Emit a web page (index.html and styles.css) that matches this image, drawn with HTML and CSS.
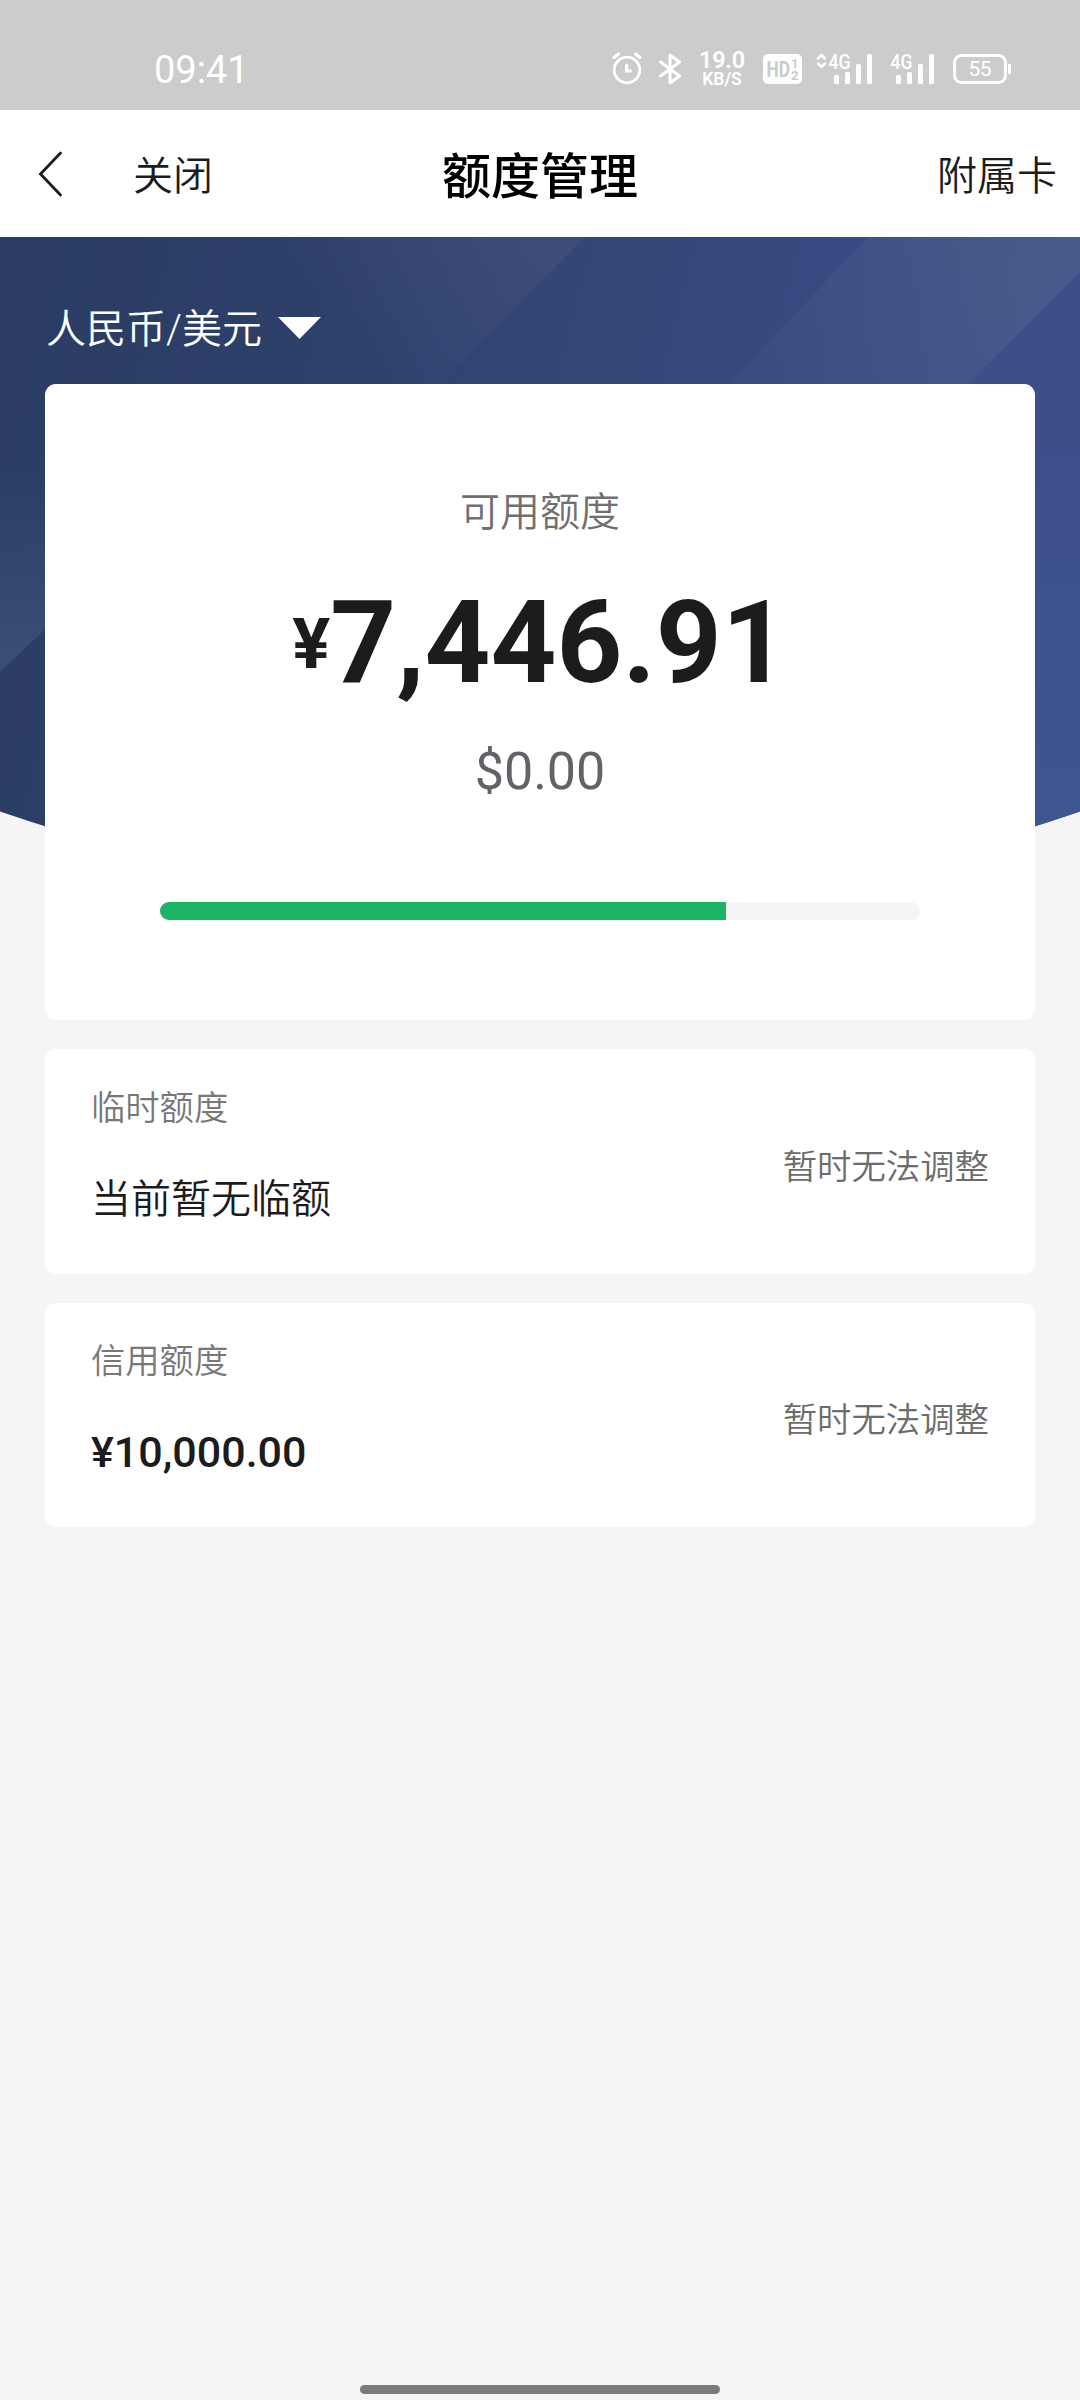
FILE: index.html
```html
<!DOCTYPE html>
<html lang="zh-CN">
<head>
<meta charset="utf-8">
<title>额度管理</title>
<link rel="stylesheet" href="styles.css">
</head>
<body>
<div class="screen">
  <div class="status">
    <span class="clock">09:41</span>
    <div class="indicators">
      <svg class="alarm" width="32" height="34" viewBox="0 0 32 34" fill="none" stroke="#fff" stroke-width="2.8" stroke-linecap="round"><circle cx="16" cy="19" r="12.8"/><path d="M15.600 14v6h4M3 6.500l4.500-3.500M29 6.500l-4.500-3.500" stroke-width="3.200"/></svg>
      <svg class="bluetooth" width="24" height="34" viewBox="0 0 24 34" fill="none" stroke="#fff" stroke-width="3" stroke-linejoin="round" stroke-linecap="round"><path d="M2.500 10l19 14-9.500 7V3l9.500 7-19 14"/></svg>
      <div class="speed"><span class="rate">19.0</span><span class="unit">KB/S</span></div>
      <svg class="hd" width="39" height="30" viewBox="0 0 39 30"><rect width="39" height="30" rx="5" fill="#fff"/><g class="hd-text"><text x="3.500" y="23" font-size="22" textLength="23.500" lengthAdjust="spacingAndGlyphs">HD</text><text x="28" y="14" font-size="13">1</text><text x="28" y="26" font-size="13">2</text></g></svg>
      <svg class="signal-a" width="58" height="34" viewBox="0 -2 58 34"><path d="M2 6.500l3.500-3.500 3.500 3.500M2 11.500l3.500 3.500 3.500-3.500" fill="none" stroke="#fff" stroke-width="2.600" stroke-linecap="round"/><text class="net" x="12.500" y="16.500" textLength="22" lengthAdjust="spacingAndGlyphs">4G</text><g fill="#fff"><rect x="18" y="23" width="5" height="9" rx="1.500"/><rect x="29" y="20" width="5" height="12" rx="1.500"/><rect x="40" y="12" width="5" height="20" rx="1.500"/><rect x="51" y="2" width="5" height="30" rx="1.500"/></g></svg>
      <svg class="signal-b" width="46" height="34" viewBox="0 -2 46 34"><text class="net" x="0.500" y="16.500" textLength="22" lengthAdjust="spacingAndGlyphs">4G</text><g fill="#fff"><rect x="6" y="23" width="5" height="9" rx="1.500"/><rect x="17" y="20" width="5" height="12" rx="1.500"/><rect x="28" y="12" width="5" height="20" rx="1.500"/><rect x="39" y="2" width="5" height="30" rx="1.500"/></g></svg>
      <svg class="battery" width="59" height="30" viewBox="0 0 59 30"><rect x="1.500" y="1.500" width="51" height="27" rx="7" fill="none" stroke="#fff" stroke-width="3"/><rect x="55" y="10" width="3" height="10" rx="1" fill="#fff"/><text class="level" x="15.500" y="22" textLength="23">55</text></svg>
    </div>
  </div>

  <header class="nav">
    <div class="nav-left">
      <svg class="back" width="26" height="48" viewBox="0 0 26 48" fill="none" stroke="#1c1c1c" stroke-width="2.800" stroke-linecap="round"><path d="M22.500 3L2.500 24l20 21"/></svg>
      <span>关闭</span>
    </div>
    <h1 class="title">额度管理</h1>
    <span class="nav-right">附属卡</span>
  </header>

  <main class="content">
    <svg class="backdrop" width="1080" height="620" viewBox="0 0 1080 620">
      <defs>
        <linearGradient id="base" x1="0" y1="0" x2="1" y2="0.15"><stop offset="0" stop-color="#2a3c62"/><stop offset=".3" stop-color="#2d406a"/><stop offset=".6" stop-color="#344779"/><stop offset="1" stop-color="#3d4f8e"/></linearGradient>
        <linearGradient id="s1" gradientUnits="userSpaceOnUse" x1="390" y1="140" x2="530" y2="10"><stop offset="0" stop-color="#4a5680" stop-opacity="0"/><stop offset="1" stop-color="#4a5680" stop-opacity=".45"/></linearGradient>
        <linearGradient id="s2" gradientUnits="userSpaceOnUse" x1="0" y1="220" x2="0" y2="430"><stop offset="0" stop-color="#4c6585" stop-opacity="0"/><stop offset="1" stop-color="#4c6585" stop-opacity=".45"/></linearGradient>
        <linearGradient id="s3" gradientUnits="userSpaceOnUse" x1="740" y1="140" x2="1010" y2="50"><stop offset="0" stop-color="#4a5987" stop-opacity=".15"/><stop offset="1" stop-color="#4a5f8a" stop-opacity=".65"/></linearGradient>
        <linearGradient id="s4" x1="0" y1="0" x2="0" y2="1"><stop offset=".2" stop-color="#3d4e89"/><stop offset="1" stop-color="#3e5691"/></linearGradient>
        <clipPath id="shape"><path d="M0 0H1080V574.500Q540 760 0 574.500Z"/></clipPath>
      </defs>
      <g clip-path="url(#shape)">
        <path fill="url(#base)" d="M0 0h1080v620H0z"/>
        <path fill="url(#s1)" d="M0 0h586L436 150H0z"/>
        <path fill="url(#s2)" d="M0 200h60v178L0 435z"/>
        <path fill="url(#s3)" d="M868 0h212v36L960 156H720z"/>
        <path fill="url(#s4)" d="M1080 36v584H960V156z"/>
      </g>
    </svg>

    <div class="currency">
      <span>人民币/美元</span>
      <svg class="caret" width="43" height="22" viewBox="0 0 43 22"><path d="M0 0h43L21.500 22z" fill="#fff"/></svg>
    </div>

    <section class="card summary">
      <div class="label">可用额度</div>
      <div class="amount"><span class="yen">¥</span><span class="figure">7,446.91</span></div>
      <div class="usd">$0.00</div>
      <div class="track"><div class="fill" style="width:74.47%"></div></div>
    </section>

    <section class="card row">
      <div class="info">
        <span class="name">临时额度</span>
        <span class="value">当前暂无临额</span>
      </div>
      <span class="note">暂时无法调整</span>
    </section>

    <section class="card row">
      <div class="info">
        <span class="name">信用额度</span>
        <span class="value money">¥10,000.00</span>
      </div>
      <span class="note">暂时无法调整</span>
    </section>
  </main>
  <div class="home-bar"></div>
</div>
</body>
</html>
```
FILE: styles.css
```css
* { box-sizing: border-box; }
body {
  margin: 0;
  background: #f5f5f5;
  font-family: Roboto, "Noto Sans CJK SC", sans-serif;
  color: #1c1c1c;
}
svg { display: block; flex: none; overflow: visible; }
.screen {
  width: 1080px;
  height: 2400px;
  display: flex;
  flex-direction: column;
  overflow: hidden;
}

.status {
  height: 110px;
  padding: 28px 68px 0 154px;
  background: #ccc;
  color: #fff;
  display: flex;
  justify-content: space-between;
  align-items: center;
}
.clock { font-size: 38px; line-height: 46px; padding-top: 1px; }
.indicators { display: flex; align-items: center; height: 40px; }
.alarm { margin-top: -3px; }
.bluetooth { margin-left: 15px; }
.speed {
  width: 46px;
  margin-left: 17px;
  display: flex;
  flex-direction: column;
  align-items: center;
  font-weight: 600;
}
.rate { font-size: 23.5px; line-height: 20px; letter-spacing: -0.3px; }
.unit { font-size: 17.5px; line-height: 18px; }
.hd { margin-left: 18px; }
.hd-text { fill: #ccc; font-weight: 700; }
.signal-a { margin-left: 14px; margin-top: -4px; }
.signal-b { margin-left: 16px; margin-top: -4px; }
.battery { margin-left: 17px; }
.net { fill: #fff; font-size: 20px; font-weight: 500; }
.level { fill: #fff; font-size: 21px; }

.nav {
  height: 127px;
  padding: 0 23px 0 38px;
  background: #fff;
  display: grid;
  grid-template-columns: 1fr auto 1fr;
  align-items: center;
  font-size: 40px;
}
.nav-left { display: flex; align-items: center; gap: 69px; }
.nav-left span, .nav-right { font-weight: 350; padding-bottom: 2px; }
.title {
  margin: 0 0 0 -15px;
  padding-bottom: 3px;
  font-size: 49px;
  font-weight: 500;
  color: #000;
}
.nav-right { justify-self: end; }

.content {
  position: relative;
  flex: 1;
  padding: 0 45px;
  display: flex;
  flex-direction: column;
}
.backdrop { position: absolute; left: 0; top: 0; z-index: -1; }
.currency {
  height: 147px;
  padding: 30px 0 0 1px;
  display: flex;
  align-items: center;
  gap: 16px;
  color: #fff;
  font-size: 40px;
  font-weight: 350;
}
.caret { margin-top: 5px; }
.card { background: #fff; border-radius: 11px; }
.summary {
  height: 636px;
  padding-top: 99px;
  display: flex;
  flex-direction: column;
  align-items: center;
}
.label { font-size: 40px; line-height: 60px; color: #707070; font-weight: 350; }
.amount {
  height: 150px;
  margin-top: 24px;
  display: flex;
  align-items: center;
  font-weight: 700;
}
.yen { font-size: 71px; line-height: 72px; padding-top: 4px; }
.figure { font-size: 115px; line-height: 115px; }
.usd { margin-top: 25px; font-size: 52px; line-height: 60px; color: #606468; }
.track {
  width: 760px;
  height: 18px;
  margin-top: 100px;
  border-radius: 9px;
  background: #f5f5f5;
  overflow: hidden;
}
.fill { height: 100%; background: #1bb465; }

.row {
  height: 225px;
  margin-top: 29px;
  padding: 0 46px;
  display: flex;
  justify-content: space-between;
  align-items: center;
}
.row ~ .row { height: 224px; }
.info { display: flex; flex-direction: column; gap: 37px; padding-bottom: 10px; }
.row ~ .row .info { padding-bottom: 13px; }
.name { font-size: 34.3px; line-height: 50px; color: #787878; font-weight: 350; }
.value { font-size: 40px; line-height: 60px; font-weight: 350; }
.money { font-size: 43px; line-height: 58px; font-weight: 500; }
.note { font-size: 34.4px; line-height: 50px; color: #6c6c6c; padding-top: 10px; font-weight: 350; }

.home-bar {
  width: 360px;
  height: 9px;
  margin: 0 auto 6px;
  border-radius: 5px;
  background: #7b7b7b;
}
```
